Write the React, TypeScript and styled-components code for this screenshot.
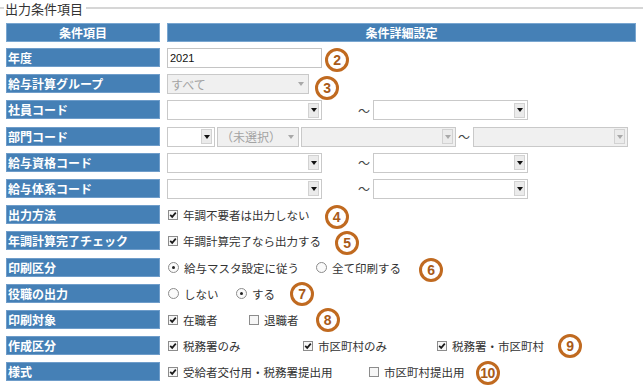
import React from "react";
import styled, { createGlobalStyle } from "styled-components";

const GlobalStyle = createGlobalStyle`
    body {
        margin: 0;
        background: #ffffff;
        font-family: "Noto Sans CJK JP", "Liberation Sans", sans-serif;
        font-size: 12px;
        color: #333333;
    }
`;

const Page = styled.div`
    width: 643px;
    height: 389px;
    overflow: hidden;
`;

const LegendRow = styled.div`
    display: flex;
    align-items: center;
    height: 17px;
`;

const LegendLine = styled.span<{ $grow?: boolean }>`
    height: 2px;
    background: #d6d6d6;
    width: ${(p) => (p.$grow ? "auto" : "4px")};
    flex: ${(p) => (p.$grow ? 1 : "none")};
    margin-top: -2px;
`;

const LegendText = styled.span`
    font-size: 13px;
    line-height: 17px;
    color: #333333;
    padding: 0 3px 0 1px;
`;

const Table = styled.div`
    width: 630px;
    margin: 6px 0 0 6px;
`;

const Grid = styled.div<{ $head?: boolean }>`
    display: grid;
    grid-template-columns: 154px 1fr;
    column-gap: 7px;
    height: ${(p) => (p.$head ? "19px" : "20px")};
`;

const Rows = styled.div`
    display: flex;
    flex-direction: column;
    row-gap: 6.2px;
    margin-top: 6px;
`;

const HeadCell = styled.div`
    box-sizing: border-box;
    height: 19px;
    background: #4580b6;
    border: 1px solid #79a6d0;
    color: #ffffff;
    font-weight: bold;
    font-size: 12px;
    line-height: 17px;
    text-align: center;
`;

const LabelCell = styled.div`
    box-sizing: border-box;
    height: 19px;
    background: #4580b6;
    border: 1px solid #6f9dca;
    color: #ffffff;
    font-weight: bold;
    font-size: 12px;
    line-height: 17px;
    padding-left: 1px;
    white-space: nowrap;
`;

const ValueCell = styled.div`
    display: flex;
    align-items: center;
    height: 20px;
    white-space: nowrap;
`;

const TextInput = styled.div`
    box-sizing: border-box;
    width: 155px;
    height: 20px;
    border: 1px solid #c4c4c4;
    background: #ffffff;
    font-family: "Liberation Sans", sans-serif;
    font-size: 11px;
    line-height: 18px;
    padding-left: 2px;
    color: #111111;
`;

const SelectBox = styled.div<{ $w: number; $off?: boolean }>`
    box-sizing: border-box;
    width: ${(p) => p.$w}px;
    height: 20px;
    border: 1px solid #c9c9c9;
    background: ${(p) => (p.$off ? "#f0f0f0" : "#ffffff")};
    display: flex;
    align-items: center;
    padding-left: 3px;
    color: #a3a3a3;
    font-size: 12px;
    flex: none;
`;

const SelectText = styled.span`
    flex: 1;
    overflow: hidden;
`;

const ArrowButton = styled.span<{ $off?: boolean; $bare?: boolean }>`
    box-sizing: border-box;
    width: 11px;
    height: 15px;
    margin-right: 2px;
    display: flex;
    align-items: center;
    justify-content: center;
    border: 1px solid ${(p) => (p.$bare ? "transparent" : "#d2d2d2")};
    background: ${(p) => (p.$bare ? "transparent" : "#ebebeb")};

    &::after {
        content: "";
        width: 0;
        height: 0;
        border-left: 3px solid transparent;
        border-right: 3px solid transparent;
        border-top: 4px solid ${(p) => (p.$off ? "#a8a8a8" : "#111111")};
    }
`;

const Tilde = styled.span<{ $ml: number; $mr: number }>`
    margin: 0 ${(p) => p.$mr}px 0 ${(p) => p.$ml}px;
    font-size: 12px;
    color: #444444;
`;

const Option = styled.span<{ $w?: number }>`
    display: inline-flex;
    align-items: center;
    gap: 5px;
    width: ${(p) => (p.$w ? `${p.$w}px` : "auto")};
    flex: none;
    padding-left: 1px;
    font-size: 11.5px;
    color: #333333;
`;

const CheckBox = styled.span`
    box-sizing: border-box;
    width: 10px;
    height: 10px;
    border: 1px solid #8c8c8c;
    background: #f6f6f6;
    display: inline-flex;
    align-items: center;
    justify-content: center;
`;

const RadioDot = styled.span<{ $on?: boolean }>`
    box-sizing: border-box;
    width: 11px;
    height: 11px;
    border: 1px solid #8c8c8c;
    border-radius: 50%;
    background: #fafafa;
    display: inline-flex;
    align-items: center;
    justify-content: center;

    &::after {
        content: "";
        width: 3px;
        height: 3px;
        border-radius: 50%;
        background: ${(p) => (p.$on ? "#222222" : "transparent")};
    }
`;

const Badge = styled.span<{ $ml: number; $dy: number }>`
    box-sizing: border-box;
    flex: none;
    width: 24px;
    height: 24px;
    margin-left: ${(p) => p.$ml}px;
    transform: translateY(${(p) => p.$dy}px);
    border: 3px solid #c06a20;
    border-radius: 50%;
    background: #ffffff;
    display: inline-flex;
    align-items: center;
    justify-content: center;
    color: #a85a18;
    font-family: "Liberation Sans", sans-serif;
    font-weight: bold;
    font-size: 14px;
    letter-spacing: -0.5px;
`;

const Check = ({ on }: { on: boolean }) => (
    <CheckBox>
        {on && (
            <svg width="8" height="8" viewBox="0 0 8 8">
                <path d="M1.2 3.8 L3.2 5.9 L6.8 1.6" fill="none" stroke="#1a1a1a" strokeWidth="1.7" />
            </svg>
        )}
    </CheckBox>
);

const CheckOpt = ({ on, text, w }: { on: boolean; text: string; w?: number }) => (
    <Option $w={w}>
        <Check on={on} />
        {text}
    </Option>
);

const RadioOpt = ({ on, text, w }: { on: boolean; text: string; w?: number }) => (
    <Option $w={w}>
        <RadioDot $on={on} />
        {text}
    </Option>
);

const Select = ({ w, text, off, bare }: { w: number; text?: string; off?: boolean; bare?: boolean }) => (
    <SelectBox $w={w} $off={off}>
        <SelectText>{text}</SelectText>
        <ArrowButton $off={off} $bare={bare} />
    </SelectBox>
);

const CodeRange = () => (
    <>
        <Select w={155} />
        <Tilde $ml={36} $mr={3}>〜</Tilde>
        <Select w={155} />
    </>
);

const App = () => (
    <Page>
        <GlobalStyle />
        <LegendRow>
            <LegendLine />
            <LegendText>出力条件項目</LegendText>
            <LegendLine $grow />
        </LegendRow>
        <Table>
            <Grid $head>
                <HeadCell>条件項目</HeadCell>
                <HeadCell>条件詳細設定</HeadCell>
            </Grid>
            <Rows>
                <Grid>
                    <LabelCell>年度</LabelCell>
                    <ValueCell>
                        <TextInput>2021</TextInput>
                        <Badge $ml={3} $dy={2}>2</Badge>
                    </ValueCell>
                </Grid>
                <Grid>
                    <LabelCell>給与計算グループ</LabelCell>
                    <ValueCell>
                        <Select w={142} text="すべて" off bare />
                        <Badge $ml={6} $dy={4}>3</Badge>
                    </ValueCell>
                </Grid>
                <Grid>
                    <LabelCell>社員コード</LabelCell>
                    <ValueCell>
                        <CodeRange />
                    </ValueCell>
                </Grid>
                <Grid>
                    <LabelCell>部門コード</LabelCell>
                    <ValueCell>
                        <Select w={48} />
                        <Tilde $ml={0} $mr={2} />
                        <Select w={82} text="（未選択）" off bare />
                        <Tilde $ml={0} $mr={2} />
                        <Select w={155} off />
                        <Tilde $ml={2} $mr={3}>〜</Tilde>
                        <Select w={155} off />
                    </ValueCell>
                </Grid>
                <Grid>
                    <LabelCell>給与資格コード</LabelCell>
                    <ValueCell>
                        <CodeRange />
                    </ValueCell>
                </Grid>
                <Grid>
                    <LabelCell>給与体系コード</LabelCell>
                    <ValueCell>
                        <CodeRange />
                    </ValueCell>
                </Grid>
                <Grid>
                    <LabelCell>出力方法</LabelCell>
                    <ValueCell>
                        <CheckOpt on text="年調不要者は出力しない" />
                        <Badge $ml={15} $dy={2}>4</Badge>
                    </ValueCell>
                </Grid>
                <Grid>
                    <LabelCell>年調計算完了チェック</LabelCell>
                    <ValueCell>
                        <CheckOpt on text="年調計算完了なら出力する" />
                        <Badge $ml={14} $dy={2}>5</Badge>
                    </ValueCell>
                </Grid>
                <Grid>
                    <LabelCell>印刷区分</LabelCell>
                    <ValueCell>
                        <RadioOpt on text="給与マスタ設定に従う" w={147} />
                        <RadioOpt on={false} text="全て印刷する" />
                        <Badge $ml={18} $dy={2}>6</Badge>
                    </ValueCell>
                </Grid>
                <Grid>
                    <LabelCell>役職の出力</LabelCell>
                    <ValueCell>
                        <RadioOpt on={false} text="しない" w={67} />
                        <RadioOpt on text="する" />
                        <Badge $ml={15} $dy={0}>7</Badge>
                    </ValueCell>
                </Grid>
                <Grid>
                    <LabelCell>印刷対象</LabelCell>
                    <ValueCell>
                        <CheckOpt on text="在職者" w={80} />
                        <CheckOpt on={false} text="退職者" />
                        <Badge $ml={17} $dy={0}>8</Badge>
                    </ValueCell>
                </Grid>
                <Grid>
                    <LabelCell>作成区分</LabelCell>
                    <ValueCell>
                        <CheckOpt on text="税務署のみ" w={134} />
                        <CheckOpt on text="市区町村のみ" w={133} />
                        <CheckOpt on text="税務署・市区町村" />
                        <Badge $ml={14} $dy={0}>9</Badge>
                    </ValueCell>
                </Grid>
                <Grid>
                    <LabelCell>様式</LabelCell>
                    <ValueCell>
                        <CheckOpt on text="受給者交付用・税務署提出用" w={200} />
                        <CheckOpt on={false} text="市区町村提出用" />
                        <Badge $ml={11} $dy={1}>10</Badge>
                    </ValueCell>
                </Grid>
            </Rows>
        </Table>
    </Page>
);

export default App;
